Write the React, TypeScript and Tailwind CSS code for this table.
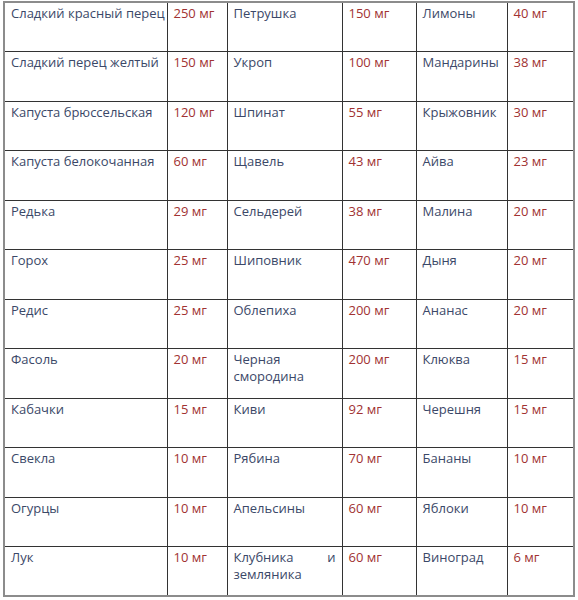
import React from 'react';

type Row = [string, string, string, string, string, string];

const rows: Row[] = [
  ['Сладкий красный перец', '250 мг', 'Петрушка', '150 мг', 'Лимоны', '40 мг'],
  ['Сладкий перец желтый', '150 мг', 'Укроп', '100 мг', 'Мандарины', '38 мг'],
  ['Капуста брюссельская', '120 мг', 'Шпинат', '55 мг', 'Крыжовник', '30 мг'],
  ['Капуста белокочанная', '60 мг', 'Щавель', '43 мг', 'Айва', '23 мг'],
  ['Редька', '29 мг', 'Сельдерей', '38 мг', 'Малина', '20 мг'],
  ['Горох', '25 мг', 'Шиповник', '470 мг', 'Дыня', '20 мг'],
  ['Редис', '25 мг', 'Облепиха', '200 мг', 'Ананас', '20 мг'],
  ['Фасоль', '20 мг', 'Черная смородина', '200 мг', 'Клюква', '15 мг'],
  ['Кабачки', '15 мг', 'Киви', '92 мг', 'Черешня', '15 мг'],
  ['Свекла', '10 мг', 'Рябина', '70 мг', 'Бананы', '10 мг'],
  ['Огурцы', '10 мг', 'Апельсины', '60 мг', 'Яблоки', '10 мг'],
  ['Лук', '10 мг', 'Клубника и земляника', '60 мг', 'Виноград', '6 мг'],
];

const widths = ['w-[163px]', 'w-[60px]', 'w-[115px]', 'w-[74px]', 'w-[91px]', 'w-[67px]'];

export default function App() {
  return (
    <div className="bg-white w-[578px] h-[600px] pl-[3px] pt-[1px]">
      <table
        className="table-fixed border-collapse border-2 border-[#8c8c8c] w-[572px] text-[13px] leading-[17px]"
        style={{ fontFamily: '"Open Sans", "DejaVu Sans", sans-serif' }}
      >
        <colgroup>
          {widths.map((w, i) => (
            <col key={i} className={w} />
          ))}
        </colgroup>
        <tbody>
          {rows.map((r, i) => (
            <tr key={i} className="h-[49.5px]">
              {r.map((cell, j) => (
                <td
                  key={j}
                  className={
                    'border border-[#333] align-top px-[6px] pt-[2px] text-justify ' +
                    (j === 2 ? '' : 'whitespace-nowrap ') +
                    (j % 2 === 0 ? 'text-[#3b4868]' : 'text-[#a13232]')
                  }
                >
                  {cell}
                </td>
              ))}
            </tr>
          ))}
        </tbody>
      </table>
    </div>
  );
}
